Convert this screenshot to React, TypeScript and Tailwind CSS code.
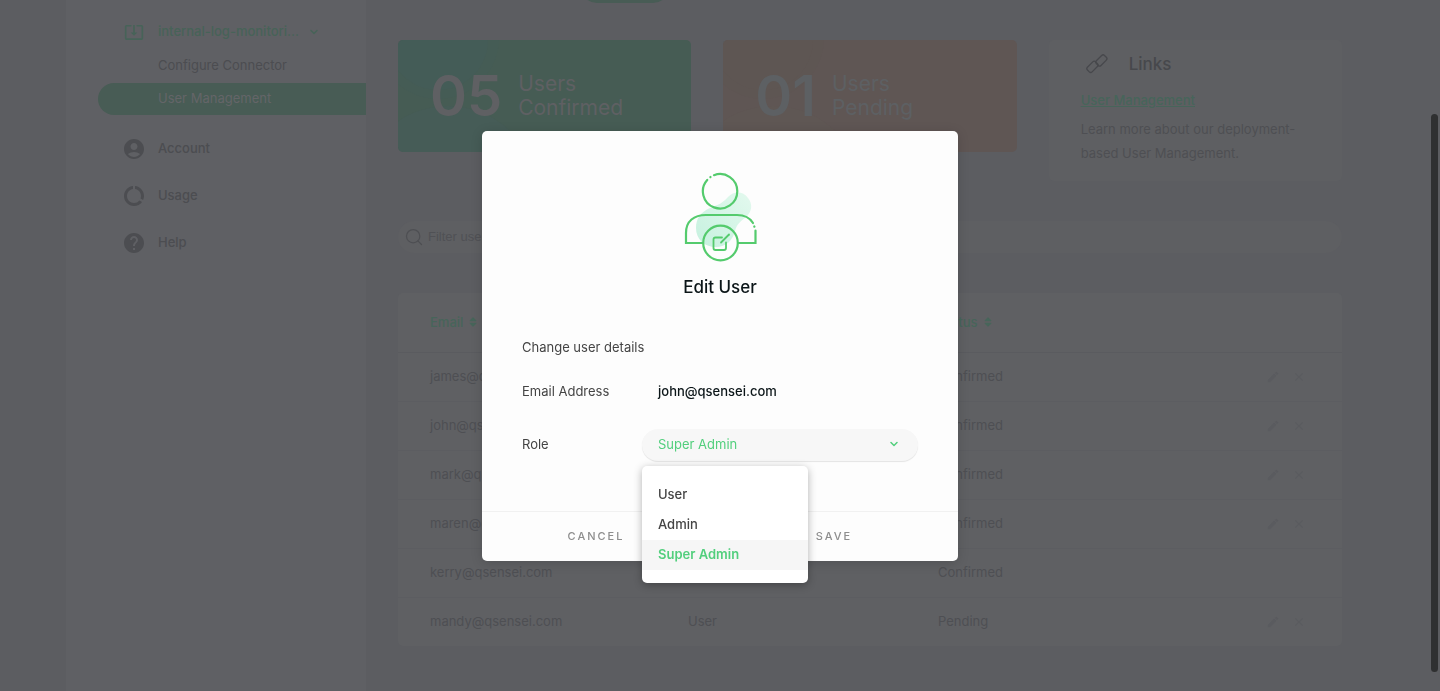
import { useState } from "react";
import { MdAccountCircle, MdDataUsage, MdHelp, MdSystemUpdateAlt, MdEdit, MdClose } from "react-icons/md";
import { FaSort } from "react-icons/fa";
import { ChevronDown, Search } from "lucide-react";

const roles = ["User", "Admin", "Super Admin"];

const users = [
  { email: "james@qsensei.com", role: "Admin", status: "Confirmed", editable: true },
  { email: "john@qsensei.com", role: "Super Admin", status: "Confirmed", editable: true },
  { email: "mark@qsensei.com", role: "User", status: "Confirmed", editable: true },
  { email: "maren@qsensei.com", role: "User", status: "Confirmed", editable: true },
  { email: "kerry@qsensei.com", role: "User", status: "Confirmed", editable: false },
  { email: "mandy@qsensei.com", role: "User", status: "Pending", editable: true },
];

const navItems = [
  { label: "Account", Icon: MdAccountCircle },
  { label: "Usage", Icon: MdDataUsage },
  { label: "Help", Icon: MdHelp },
];

const LinkIcon = () => (
  <svg className="w-6 h-6" viewBox="0 0 24 24" fill="none" stroke="currentColor" strokeWidth="1.3">
    <rect x="1.7" y="11.6" width="11.5" height="6.6" rx="2" transform="rotate(-45 7.4 14.9)" />
    <rect x="10.6" y="5.2" width="11.5" height="6.6" rx="2" transform="rotate(-45 16.3 8.5)" />
  </svg>
);

const EditUserIcon = () => (
  <svg className="w-[74px] h-[92px]" viewBox="0 0 74 92" fill="none">
    <defs>
      <linearGradient id="blob" x1="0" y1="1" x2="1" y2="0">
        <stop offset="0" stopColor="#c6f1df" />
        <stop offset="1" stopColor="#e3f9ee" />
      </linearGradient>
    </defs>
    <path
      d="M13 57c0-10 5-16 14-20 8-3 13-5 18-11 6-6 15-6 20 1 5 6 4 14-2 19-6 5-9 7-11 14-2 9-9 16-19 16-12 0-20-8-20-19z"
      fill="url(#blob)"
    />
    <g stroke="#54cb6d" strokeWidth="2.2" strokeLinecap="round">
      <path d="M31 4.200A17.200 17.200 0 1 1 24.200 8.900" />
      <path d="M27.400 6.100l.1-.1" />
      <path d="M20 72H3V62c0-12 8-18 20-18h31c8 0 13 3 16 8" />
      <path d="M71.300 55.500l.1.2" />
      <path d="M72.500 59.500V72H55" />
      <circle cx="37.500" cy="72" r="17.300" />
      <path d="M39 66.500h-6.500a2 2 0 0 0-2 2V77a2 2 0 0 0 2 2H41a2 2 0 0 0 2-2v-5.500" strokeWidth="1.800" />
      <path d="M38 71.500l8-8" strokeWidth="1.800" />
    </g>
  </svg>
);

const StatCard = (props: { count: string; label: string; variant: "confirmed" | "pending" }) => {
  const { count, label, variant } = props;
  const confirmed = variant === "confirmed";
  return (
    <div
      className={`relative overflow-hidden rounded-[5px] h-28 px-8 flex items-center gap-4 ${
        confirmed ? "bg-[#465c54] text-[#5f6063]" : "bg-[#5f5654] text-[#5d6063]"
      }`}
    >
      <svg className="absolute top-0 left-0 w-40 h-28" viewBox="0 0 160 112" fill={confirmed ? "#455c59" : "#5f5753"}>
        <circle cx="40" cy="-2" r="61" opacity="0.35" />
        <circle cx="40" cy="0" r="50" opacity="0.6" />
        <circle cx="50" cy="156" r="90" opacity="0.5" />
      </svg>
      <span className="relative text-[56px] leading-none font-semibold">{count}</span>
      <span className="relative text-[21px] leading-6 w-28">{label}</span>
    </div>
  );
};

const Sidebar = () => (
  <aside className="w-[300px] shrink-0 bg-[#5f6064] pt-[14px] text-[13px] text-[#4c4d51]">
    <nav>
      <button className="flex items-center w-full h-[35px] pl-[58px] text-[#476358] font-medium">
        <MdSystemUpdateAlt className="w-5 h-5" />
        <span className="ml-[14px] w-[150px] text-left">internal-log-monitori...</span>
        <ChevronDown className="w-3 h-3" strokeWidth={3} />
      </button>
      <a href="#connector" className="flex items-center h-[34px] pl-[92px]">
        Configure Connector
      </a>
      <a href="#users" className="flex items-center h-8 ml-8 pl-[60px] rounded-l-full bg-[#485c55] text-[#646568]">
        User Management
      </a>
      <div className="mt-[10px]">
        {navItems.map(({ label, Icon }) => (
          <a key={label} href={`#${label.toLowerCase()}`} className="flex items-center h-[47px] pl-14 gap-3 font-medium">
            <Icon className="w-6 h-6" />
            {label}
          </a>
        ))}
      </div>
    </nav>
  </aside>
);

const UserTable = () => (
  <table className="w-full mt-10 table-fixed text-left rounded-[5px] bg-[#5f6063]">
    <colgroup>
      <col className="w-[290px]" />
      <col className="w-[250px]" />
      <col />
      <col className="w-[120px]" />
    </colgroup>
    <thead className="text-[#47655a]">
      <tr className="h-[59px] border-b border-[#5a5b5f]">
        {["Email", "Role", "Status"].map((title) => (
          <th key={title} className="font-medium first:pl-8">
            <button className="flex items-center gap-1">
              {title}
              <FaSort className="w-3 h-3" />
            </button>
          </th>
        ))}
        <th aria-label="Actions" />
      </tr>
    </thead>
    <tbody>
      {users.map((user) => (
        <tr key={user.email} className="h-[49px] border-b border-[#5c5d61] last:border-b-0">
          <td className="pl-8">{user.email}</td>
          <td>{user.role}</td>
          <td>{user.status}</td>
          <td className="pr-9">
            {user.editable && (
              <div className="flex justify-end gap-3 text-[#5a5b5f]">
                <button aria-label="Edit user">
                  <MdEdit className="w-[14px] h-[14px]" />
                </button>
                <button aria-label="Remove user">
                  <MdClose className="w-[14px] h-[14px]" />
                </button>
              </div>
            )}
          </td>
        </tr>
      ))}
    </tbody>
  </table>
);

const EditUserModal = () => {
  const [role, setRole] = useState("Super Admin");
  return (
    <div className="fixed inset-0 flex items-center justify-center">
      <div
        role="dialog"
        aria-labelledby="modal-title"
        className="w-[476px] rounded-[5px] bg-[#fdfdfd] text-[#444] shadow-[0_2px_12px_rgba(0,0,0,0.15)]"
      >
        <div className="px-10 pt-10 pb-[50px]">
          <div className="flex flex-col items-center">
            <EditUserIcon />
            <h2 id="modal-title" className="mt-3 text-[17px] leading-6 font-medium text-[#0b1518]">
              Edit User
            </h2>
          </div>
          <p className="mt-[38px] leading-5">Change user details</p>
          <div className="mt-6 flex leading-5">
            <span className="w-[136px]">Email Address</span>
            <span className="font-medium text-[#0b1518]">john@qsensei.com</span>
          </div>
          <div className="mt-7 flex items-center">
            <label htmlFor="role" className="w-[120px]">
              Role
            </label>
            <div className="relative flex-1">
              <select
                id="role"
                value={role}
                onChange={(e) => setRole(e.target.value)}
                className="block w-full h-8 px-4 appearance-none rounded-full bg-[#f7f7f7] text-[#52cf7d] shadow-[0_1px_1px_rgba(0,0,0,0.1)]"
              >
                {roles.map((r) => (
                  <option key={r}>{r}</option>
                ))}
              </select>
              <ChevronDown className="absolute right-[18px] top-[9px] w-3 h-3 text-[#52cf7d]" strokeWidth={3} />
              <ul className="absolute top-[37px] left-0 w-[166px] pt-[14px] pb-[13px] rounded-[5px] bg-white font-medium shadow-[0_2px_8px_rgba(0,0,0,0.3)]">
                {roles.map((r) => (
                  <li key={r}>
                    <button
                      onClick={() => setRole(r)}
                      className={`block w-full h-[30px] px-4 text-left ${
                        r === role ? "bg-[#f6f6f6] text-[#52cf7d] font-semibold" : ""
                      }`}
                    >
                      {r}
                    </button>
                  </li>
                ))}
              </ul>
            </div>
          </div>
        </div>
        <div className="grid grid-cols-2 h-[50px] border-t border-[#f1f1f1] text-[11px] font-medium tracking-[2px] text-[#8d8d8d]">
          <button className="pr-[10px]">CANCEL</button>
          <button className="pr-[10px]">SAVE</button>
        </div>
      </div>
    </div>
  );
};

export default function App() {
  return (
    <div className="min-h-screen bg-[#5c5d61] font-['Inter',sans-serif] text-[13px] text-[#4e4f53]">
      <div className="flex min-h-screen mx-auto max-w-[1308px]">
        <Sidebar />
        <main className="flex-1 min-w-0 px-8">
          <div className="flex items-end h-[3px] overflow-hidden pl-[183px]">
            <div className="w-[88px] h-8 shrink-0 rounded-full bg-[#485c55]" />
          </div>
          <div className="mt-[37px] grid grid-cols-3 items-start gap-8">
            <StatCard count="05" label="Users Confirmed" variant="confirmed" />
            <StatCard count="01" label="Users Pending" variant="pending" />
            <section className="rounded-[5px] bg-[#5e5f62] h-[141px] px-8 pt-3">
              <h3 className="flex items-center gap-5 pl-1 text-[17px] leading-6 font-medium text-[#47484c]">
                <LinkIcon />
                Links
              </h3>
              <a href="#docs" className="inline-block mt-3 leading-6 font-medium underline text-[#47655a]">
                User Management
              </a>
              <p className="mt-[5px] leading-6">Learn more about our deployment-based User Management.</p>
            </section>
          </div>
          <label className="flex items-center gap-1 mt-10 h-8 px-[6px] rounded-full bg-[#5e5f62]">
            <Search className="w-5 h-5 shrink-0" strokeWidth={1.5} />
            <input
              aria-label="Filter users"
              placeholder="Filter users"
              className="flex-1 bg-transparent outline-none font-['Liberation_Sans',sans-serif] placeholder:text-[#505155]"
            />
          </label>
          <UserTable />
        </main>
      </div>
      <div className="fixed right-[2px] top-[114px] bottom-[19px] w-[7px] rounded-full bg-[#2f3031]" />
      <EditUserModal />
    </div>
  );
}
